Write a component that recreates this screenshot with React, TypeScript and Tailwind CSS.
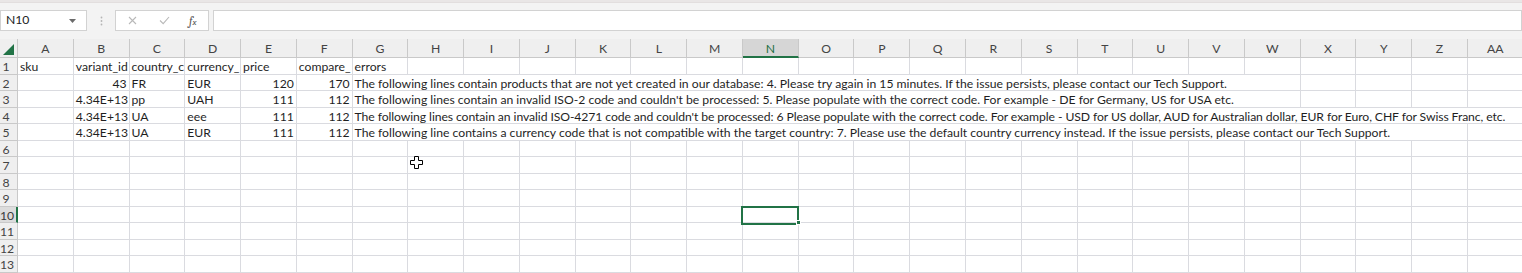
import React from 'react';

const COLS = [
  'A', 'B', 'C', 'D', 'E', 'F', 'G', 'H', 'I', 'J', 'K', 'L', 'M', 'N',
  'O', 'P', 'Q', 'R', 'S', 'T', 'U', 'V', 'W', 'X', 'Y', 'Z', 'AA',
];

interface DataRow {
  sku: string;
  variant: string;
  country: string;
  currency: string;
  price: string;
  compare: string;
  error: string;
  // how many columns the error text spills over (G onwards)
  span: 'col-span-16' | 'col-span-19' | 'col-span-21';
  tight?: boolean;
}

const ROWS: DataRow[] = [
  {
    sku: '',
    variant: '43',
    country: 'FR',
    currency: 'EUR',
    price: '120',
    compare: '170',
    error:
      'The following lines contain products that are not yet created in our database: 4. Please try again in 15 minutes. If the issue persists, please contact our Tech Support.',
    span: 'col-span-16',
  },
  {
    sku: '',
    variant: '4.34E+13',
    country: 'pp',
    currency: 'UAH',
    price: '111',
    compare: '112',
    error:
      "The following lines contain an invalid ISO-2 code and couldn't be processed: 5. Please populate with the correct code. For example - DE for Germany, US for USA etc.",
    span: 'col-span-16',
  },
  {
    sku: '',
    variant: '4.34E+13',
    country: 'UA',
    currency: 'eee',
    price: '111',
    compare: '112',
    error:
      "The following lines contain an invalid ISO-4271 code and couldn't be processed: 6 Please populate with the correct code. For example - USD for US dollar, AUD for Australian dollar, EUR for Euro, CHF for Swiss Franc, etc.",
    span: 'col-span-21',
    tight: true,
  },
  {
    sku: '',
    variant: '4.34E+13',
    country: 'UA',
    currency: 'EUR',
    price: '111',
    compare: '112',
    error:
      'The following line contains a currency code that is not compatible with the target country: 7. Please use the default country currency instead. If the issue persists, please contact our Tech Support.',
    span: 'col-span-19',
  },
];

const GRID = 'grid grid-cols-[18px_repeat(27,55.77px)]';
const CELL =
  'h-[16.5px] border-r border-b border-[#dadbe0] px-[2px] pt-[1px] overflow-hidden whitespace-nowrap text-[12.2px] leading-[16px] text-[#1f1f1f]';

function RowHead({ n, active = false }: { n: number; active?: boolean }) {
  return (
    <div
      className={
        active
          ? 'h-[16.5px] border-b border-r-2 border-b-[#c9c9c9] border-r-[#217346] bg-[#dcdcdc] pr-[5px] pt-[1px] text-center text-[12.2px] leading-[16px] text-[#3a3a3a]'
          : 'h-[16.5px] border-b border-r border-[#c9c9c9] bg-[#efefef] pr-[5px] pt-[1px] text-center text-[12.2px] leading-[16px] text-[#444]'
      }
    >
      {n}
    </div>
  );
}

function EmptyCells({ count, activeAt = -1 }: { count: number; activeAt?: number }) {
  return (
    <>
      {Array.from({ length: count }, (_, i) =>
        i === activeAt ? (
          <div key={i} className={`${CELL} relative overflow-visible`}>
            <div className="absolute -top-px -left-[2px] h-[19px] w-[58px] border-2 border-[#217346]" />
            <div className="absolute -right-[3px] -bottom-[3px] h-[5px] w-[5px] border border-white bg-[#217346]" />
          </div>
        ) : (
          <div key={i} className={CELL} />
        ),
      )}
    </>
  );
}

export default function App() {
  return (
    <div className="relative h-[273px] w-[1522px] overflow-hidden bg-[#f3f3f3] [font-family:Lato,'Open_Sans',sans-serif]">
      <div className="h-[3px] border-b border-[#e2dede] bg-[#e9e6e6]" />

      {/* formula bar */}
      <div className="mt-[7px] flex h-[21px] items-stretch">
        <div className="flex w-[87px] items-center justify-between border border-[#d2d2d2] bg-white pr-[10px] pl-[5px]">
          <span className="text-[12.2px] text-[#222]">N10</span>
          <svg width="7" height="4" viewBox="0 0 7 4">
            <path d="M0 0h7L3.5 4z" fill="#6b6b6b" />
          </svg>
        </div>
        <div className="flex w-[28px] items-center justify-center">
          <svg width="3" height="10" viewBox="0 0 3 10">
            <circle cx="1.5" cy="1.5" r="0.9" fill="#b5b5b5" />
            <circle cx="1.5" cy="5" r="0.9" fill="#b5b5b5" />
            <circle cx="1.5" cy="8.5" r="0.9" fill="#b5b5b5" />
          </svg>
        </div>
        <div className="flex w-[94px] items-center border border-[#d2d2d2] bg-white">
          <svg className="ml-[12px]" width="9" height="9" viewBox="0 0 9 9">
            <path d="M1 1l7 7M8 1L1 8" stroke="#b9b9b9" strokeWidth="1.1" />
          </svg>
          <svg className="ml-[22px]" width="11" height="9" viewBox="0 0 11 9">
            <path d="M1 4.5l3.2 3.2L10 1" stroke="#b9b9b9" strokeWidth="1.1" fill="none" />
          </svg>
          <span className="ml-[19px] font-serif text-[12px] leading-none text-[#555] italic">
            f<span className="text-[9px]">x</span>
          </span>
        </div>
        <div className="ml-[4px] flex-1 border border-[#d2d2d2] bg-white" />
      </div>

      {/* sheet */}
      <div className="mt-[8px] bg-white">
        {/* column headers */}
        <div className={GRID}>
          <div className="relative h-[19px] border-r border-b border-[#c9c9c9] bg-[#efefef]">
            <svg className="absolute right-[3px] bottom-[2px]" width="11" height="11" viewBox="0 0 11 11">
              <path d="M11 0v11H0z" fill="#217346" />
            </svg>
          </div>
          {COLS.map((c) =>
            c === 'N' ? (
              <div
                key={c}
                className="h-[19px] border-r border-b-2 border-r-[#c9c9c9] border-b-[#217346] bg-[#d6d6d6] pt-[2px] text-center text-[12.2px] leading-[16px] text-[#1e6e45]"
              >
                {c}
              </div>
            ) : (
              <div
                key={c}
                className="h-[19px] border-r border-b border-[#c9c9c9] bg-[#efefef] pt-[2px] text-center text-[12.2px] leading-[16px] text-[#444]"
              >
                {c}
              </div>
            ),
          )}
        </div>

        {/* row 1: field names, clipped by the neighbouring cells as in the sheet */}
        <div className={GRID}>
          <RowHead n={1} />
          <div className={CELL}>sku</div>
          <div className={CELL}>variant_id</div>
          <div className={CELL}>country_c</div>
          <div className={CELL}>currency_</div>
          <div className={CELL}>price</div>
          <div className={CELL}>compare_</div>
          <div className={CELL}>errors</div>
          <EmptyCells count={20} />
        </div>

        {ROWS.map((r, i) => (
          <div key={i} className={GRID}>
            <RowHead n={i + 2} />
            <div className={CELL}>{r.sku}</div>
            <div className={`${CELL} text-right`}>{r.variant}</div>
            <div className={CELL}>{r.country}</div>
            <div className={CELL}>{r.currency}</div>
            <div className={`${CELL} text-right`}>{r.price}</div>
            <div className={`${CELL} text-right`}>{r.compare}</div>
            <div
              className={`${CELL} ${r.span} border-r-0 ${r.tight ? 'tracking-[-0.09px]' : 'overflow-visible'}`}
            >
              {r.error}
            </div>
            <EmptyCells count={r.span === 'col-span-16' ? 5 : r.span === 'col-span-19' ? 2 : 0} />
          </div>
        ))}

        {Array.from({ length: 8 }, (_, i) => (
          <div key={i} className={GRID}>
            <RowHead n={i + 6} active={i + 6 === 10} />
            <EmptyCells count={27} activeAt={i + 6 === 10 ? 13 : -1} />
          </div>
        ))}
      </div>

      {/* mouse cursor */}
      <svg className="absolute top-[156px] left-[410px]" width="13" height="13" viewBox="0 0 13 13">
        <path
          d="M4.5 0.5h4v4h4v4h-4v4h-4v-4h-4v-4h4z"
          fill="#fff"
          stroke="#000"
          strokeWidth="1"
        />
      </svg>
    </div>
  );
}
